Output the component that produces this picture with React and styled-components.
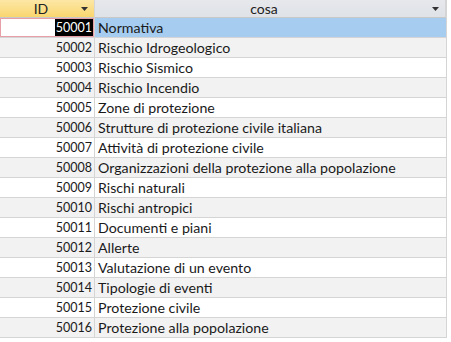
import styled, { createGlobalStyle } from "styled-components";

const rows = [
  [50001, "Normativa"],
  [50002, "Rischio Idrogeologico"],
  [50003, "Rischio Sismico"],
  [50004, "Rischio Incendio"],
  [50005, "Zone di protezione"],
  [50006, "Strutture di protezione civile italiana"],
  [50007, "Attività di protezione civile"],
  [50008, "Organizzazioni della protezione alla popolazione"],
  [50009, "Rischi naturali"],
  [50010, "Rischi antropici"],
  [50011, "Documenti e piani"],
  [50012, "Allerte"],
  [50013, "Valutazione di un evento"],
  [50014, "Tipologie di eventi"],
  [50015, "Protezione civile"],
  [50016, "Protezione alla popolazione"],
];

const Global = createGlobalStyle`
  body {
    margin: 0;
    background: #ffffff;
    font-family: Lato, "Open Sans", sans-serif;
  }
`;

function Arrow() {
  return (
    <svg width="7" height="4" viewBox="0 0 7 4">
      <path d="M0 0h7L3.5 4z" fill="#333" />
    </svg>
  );
}

function App() {
  return (
    <>
      <Global />
      <Sheet>
        <Grid>
          <HeadCell $active>
            <span>ID</span>
            <Drop><Arrow /></Drop>
          </HeadCell>
          <HeadCell>
            <span>cosa</span>
            <Drop><Arrow /></Drop>
          </HeadCell>
          {rows.map(([id, cosa], i) => (
            <Row key={id} $alt={i % 2 === 1}>
              <IdCell $focus={i === 0}>
                <IdText $sel={i === 0}>{id}</IdText>
              </IdCell>
              <TextCell $sel={i === 0}>{cosa}</TextCell>
            </Row>
          ))}
        </Grid>
      </Sheet>
    </>
  );
}

const Sheet = styled.div`
  width: 451px;
  height: 342px;
  overflow: hidden;
  background: #ffffff;
`;

const Grid = styled.div`
  width: 446px;
  display: grid;
  grid-template-columns: 95px 351px;
  border-right: 1px solid #d5d5d5;
`;

const HeadCell = styled.div`
  height: 17px;
  display: flex;
  align-items: center;
  justify-content: center;
  padding-right: 12px;
  position: relative;
  font-size: 14px;
  color: #222;
  border-right: 1px solid #d5d5d5;
  border-bottom: 1px solid #c8c8c8;
  background: ${(p) =>
    p.$active
      ? "linear-gradient(#fde7a6, #f9d66f)"
      : "linear-gradient(#e6e8ec, #dfe2e7)"};
`;

const Drop = styled.span`
  position: absolute;
  right: 6px;
  top: 7px;
  display: flex;
`;

const Row = styled.div`
  display: contents;
  & > div {
    background: ${(p) => (p.$alt ? "#f2f2f2" : "#ffffff")};
  }
`;

const IdCell = styled.div`
  height: 19px;
  display: flex;
  align-items: center;
  justify-content: flex-end;
  padding-right: 1px;
  border-right: 1px solid #d5d5d5;
  border-bottom: 1px solid #d5d5d5;
  ${(p) => p.$focus && "box-shadow: inset 0 0 0 1px #e8a0a8;"}
`;

const IdText = styled.span`
  font-size: 12.5px;
  line-height: 17px;
  padding: 0 1px;
  color: ${(p) => (p.$sel ? "#ffffff" : "#1a1a1a")};
  background: ${(p) => (p.$sel ? "#000000" : "transparent")};
`;

const TextCell = styled.div`
  height: 19px;
  display: flex;
  align-items: center;
  padding-left: 3px;
  font-size: 14.2px;
  color: #1a1a1a;
  white-space: nowrap;
  border-bottom: 1px solid #d5d5d5;
  ${(p) => p.$sel && "background: #a6cdf0 !important;"}
`;

export default App;
